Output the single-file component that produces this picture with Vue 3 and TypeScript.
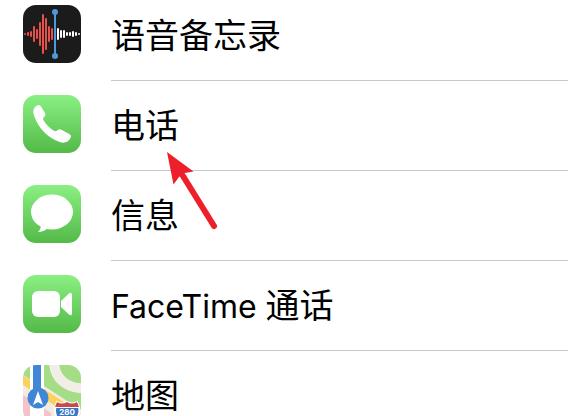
<script setup lang="ts">
interface AppRow {
  id: string
  latin?: string
  label: string
}

const rows: AppRow[] = [
  { id: 'memos', label: '语音备忘录' },
  { id: 'phone', label: '电话' },
  { id: 'messages', label: '信息' },
  { id: 'facetime', latin: 'FaceTime ', label: '通话' },
  { id: 'maps', label: '地图' },
]

// Waveform bars: x position and half height
const redBars: [number, number][] = [
  [2, 0], [5, 1], [8, 2], [11, 7], [14, 4], [17, 11], [20, 19], [23, 15], [26, 7], [29, 5],
]
const whiteBars: [number, number][] = [
  [35, 5], [38, 3], [41, 3], [44, 1], [47, 1], [50, 2], [53, 1], [56, 0],
]
</script>

<template>
  <main class="screen">
    <ul class="list">
      <li v-for="row in rows" :key="row.id" class="row">
        <svg class="icon" viewBox="0 0 58 58" aria-hidden="true">
          <defs>
            <linearGradient :id="`green-${row.id}`" x1="0" y1="0" x2="0" y2="1">
              <stop offset="0" stop-color="#8bf083" />
              <stop offset="1" stop-color="#53b947" />
            </linearGradient>
          </defs>
          <template v-if="row.id === 'memos'">
            <rect width="58" height="58" fill="#1b1b1b" />
            <g stroke="#e8504a" stroke-width="2" stroke-linecap="round">
              <line v-for="[x, h] in redBars" :key="x" :x1="x" :x2="x" :y1="29 - h" :y2="29 + h" />
            </g>
            <g stroke="#fff" stroke-width="2" stroke-linecap="round">
              <line v-for="[x, h] in whiteBars" :key="x" :x1="x" :x2="x" :y1="29 - h" :y2="29 + h" />
            </g>
            <path d="M32 7V51" stroke="#4f98dc" stroke-width="2" />
            <circle cx="32" cy="7" r="3" fill="#4f98dc" />
            <circle cx="32" cy="51" r="3" fill="#4f98dc" />
          </template>
          <template v-else-if="row.id === 'phone'">
            <rect width="58" height="58" fill="url(#green-phone)" />
            <path
              fill="#fff"
              d="M14 10.500C15.800 9.500 17 10 18 11.500L22 18C22.800 19.500 22.500 20.500 21.300 21.700C19.700 23.200 19.700 24 20.800 25.700C23.500 30 26.500 32.800 30.500 35.500C32.200 36.600 33.200 36.500 34.500 35.200C35.800 34 36.800 33.800 38.300 34.700L46.300 39C48.200 40.200 48.500 41.300 47.500 43C45.500 46.800 41.800 48.500 37.500 47.200C25.500 43.500 15 33 11 20.500C9.500 15.500 10.500 12.500 14 10.500Z"
            />
          </template>
          <template v-else-if="row.id === 'messages'">
            <rect width="58" height="58" fill="url(#green-messages)" />
            <ellipse cx="29" cy="27" rx="21" ry="17.500" fill="#fff" />
            <path d="M18 39C18 43 17 45 15 47C19 47 22 45.500 25 43Z" fill="#fff" />
          </template>
          <template v-else-if="row.id === 'facetime'">
            <rect width="58" height="58" fill="url(#green-facetime)" />
            <rect x="9" y="16" width="28" height="26" rx="6" fill="#fff" />
            <path d="M38 26L46 18.500Q49 16.500 49 20V38Q49 41.500 46 39.500L38 32Z" fill="#fff" />
          </template>
          <template v-else>
            <rect width="58" height="58" fill="#f1ece3" />
            <path d="M21 0H58V45L21 21Z" fill="#a5dc86" />
            <path d="M31 -4C31 13 43 23.500 62 23.500" fill="none" stroke="#f1eee8" stroke-width="10" />
            <path d="M0 0H8V15L0 10Z" fill="#a5dc86" />
            <path d="M-2 14L60 54" stroke="#fbd05b" stroke-width="8" />
            <path d="M0 30L28 48V58H0Z" fill="#f3c3c8" />
            <path d="M7 0H21V58H7Z" fill="#fff" />
            <path d="M10 0H18V30H10Z" fill="#3f86d6" />
            <circle cx="15" cy="33" r="10.500" fill="#3f86d6" />
            <path d="M15 26L20 40L15 37L10 40Z" fill="#fff" />
            <path d="M34 37Q39 40 44 37Q49 40 54 37Q59 46 54 53L44 58L34 53Q30 46 34 37Z" fill="#3a76c4" stroke="#fff" stroke-width="2" />
            <path d="M34 37Q39 40 44 37Q49 40 54 37L56 42H32Z" fill="#c8494e" />
            <path d="M32 42.500H56" stroke="#fff" />
            <text class="shield" x="44" y="50" text-anchor="middle">280</text>
          </template>
        </svg>
        <div class="cell"><span v-if="row.latin" class="latin">{{ row.latin }}</span>{{ row.label }}</div>
      </li>
    </ul>
    <svg class="arrow" viewBox="0 0 65 90" aria-hidden="true">
      <path d="M23 31L54 81" stroke="#ec1f2b" stroke-width="6" stroke-linecap="round" />
      <path d="M7 7L33.500 26.500L25 28L19 32L13.500 39.500Z" fill="#ec1f2b" />
    </svg>
  </main>
</template>

<style>
body {
  margin: 0;
  background: #fff;
}
</style>

<style scoped>
.screen {
  position: relative;
  height: 100vh;
  overflow: hidden;
  color: #000;
  font-family: Inter, "Noto Sans CJK SC", sans-serif;
}
.list {
  margin: -9px 0 0;
  padding: 0;
  list-style: none;
}
.row {
  display: flex;
  align-items: flex-start;
  gap: 30px;
  height: 90px;
  padding-left: 23px;
}
.icon {
  flex: none;
  width: 58px;
  height: 58px;
  margin-top: 14px;
  border-radius: 13px;
}
.cell {
  flex: 1;
  box-sizing: border-box;
  height: 90px;
  border-bottom: 1px solid #c8c7cc;
  font-size: 34px;
  line-height: 90px;
  white-space: nowrap;
}
.latin {
  font-size: 32px;
  white-space: pre;
}
.shield {
  fill: #fff;
  font-size: 8px;
  font-weight: 700;
}
.arrow {
  position: absolute;
  top: 145px;
  left: 160px;
  width: 65px;
  height: 90px;
}
</style>
